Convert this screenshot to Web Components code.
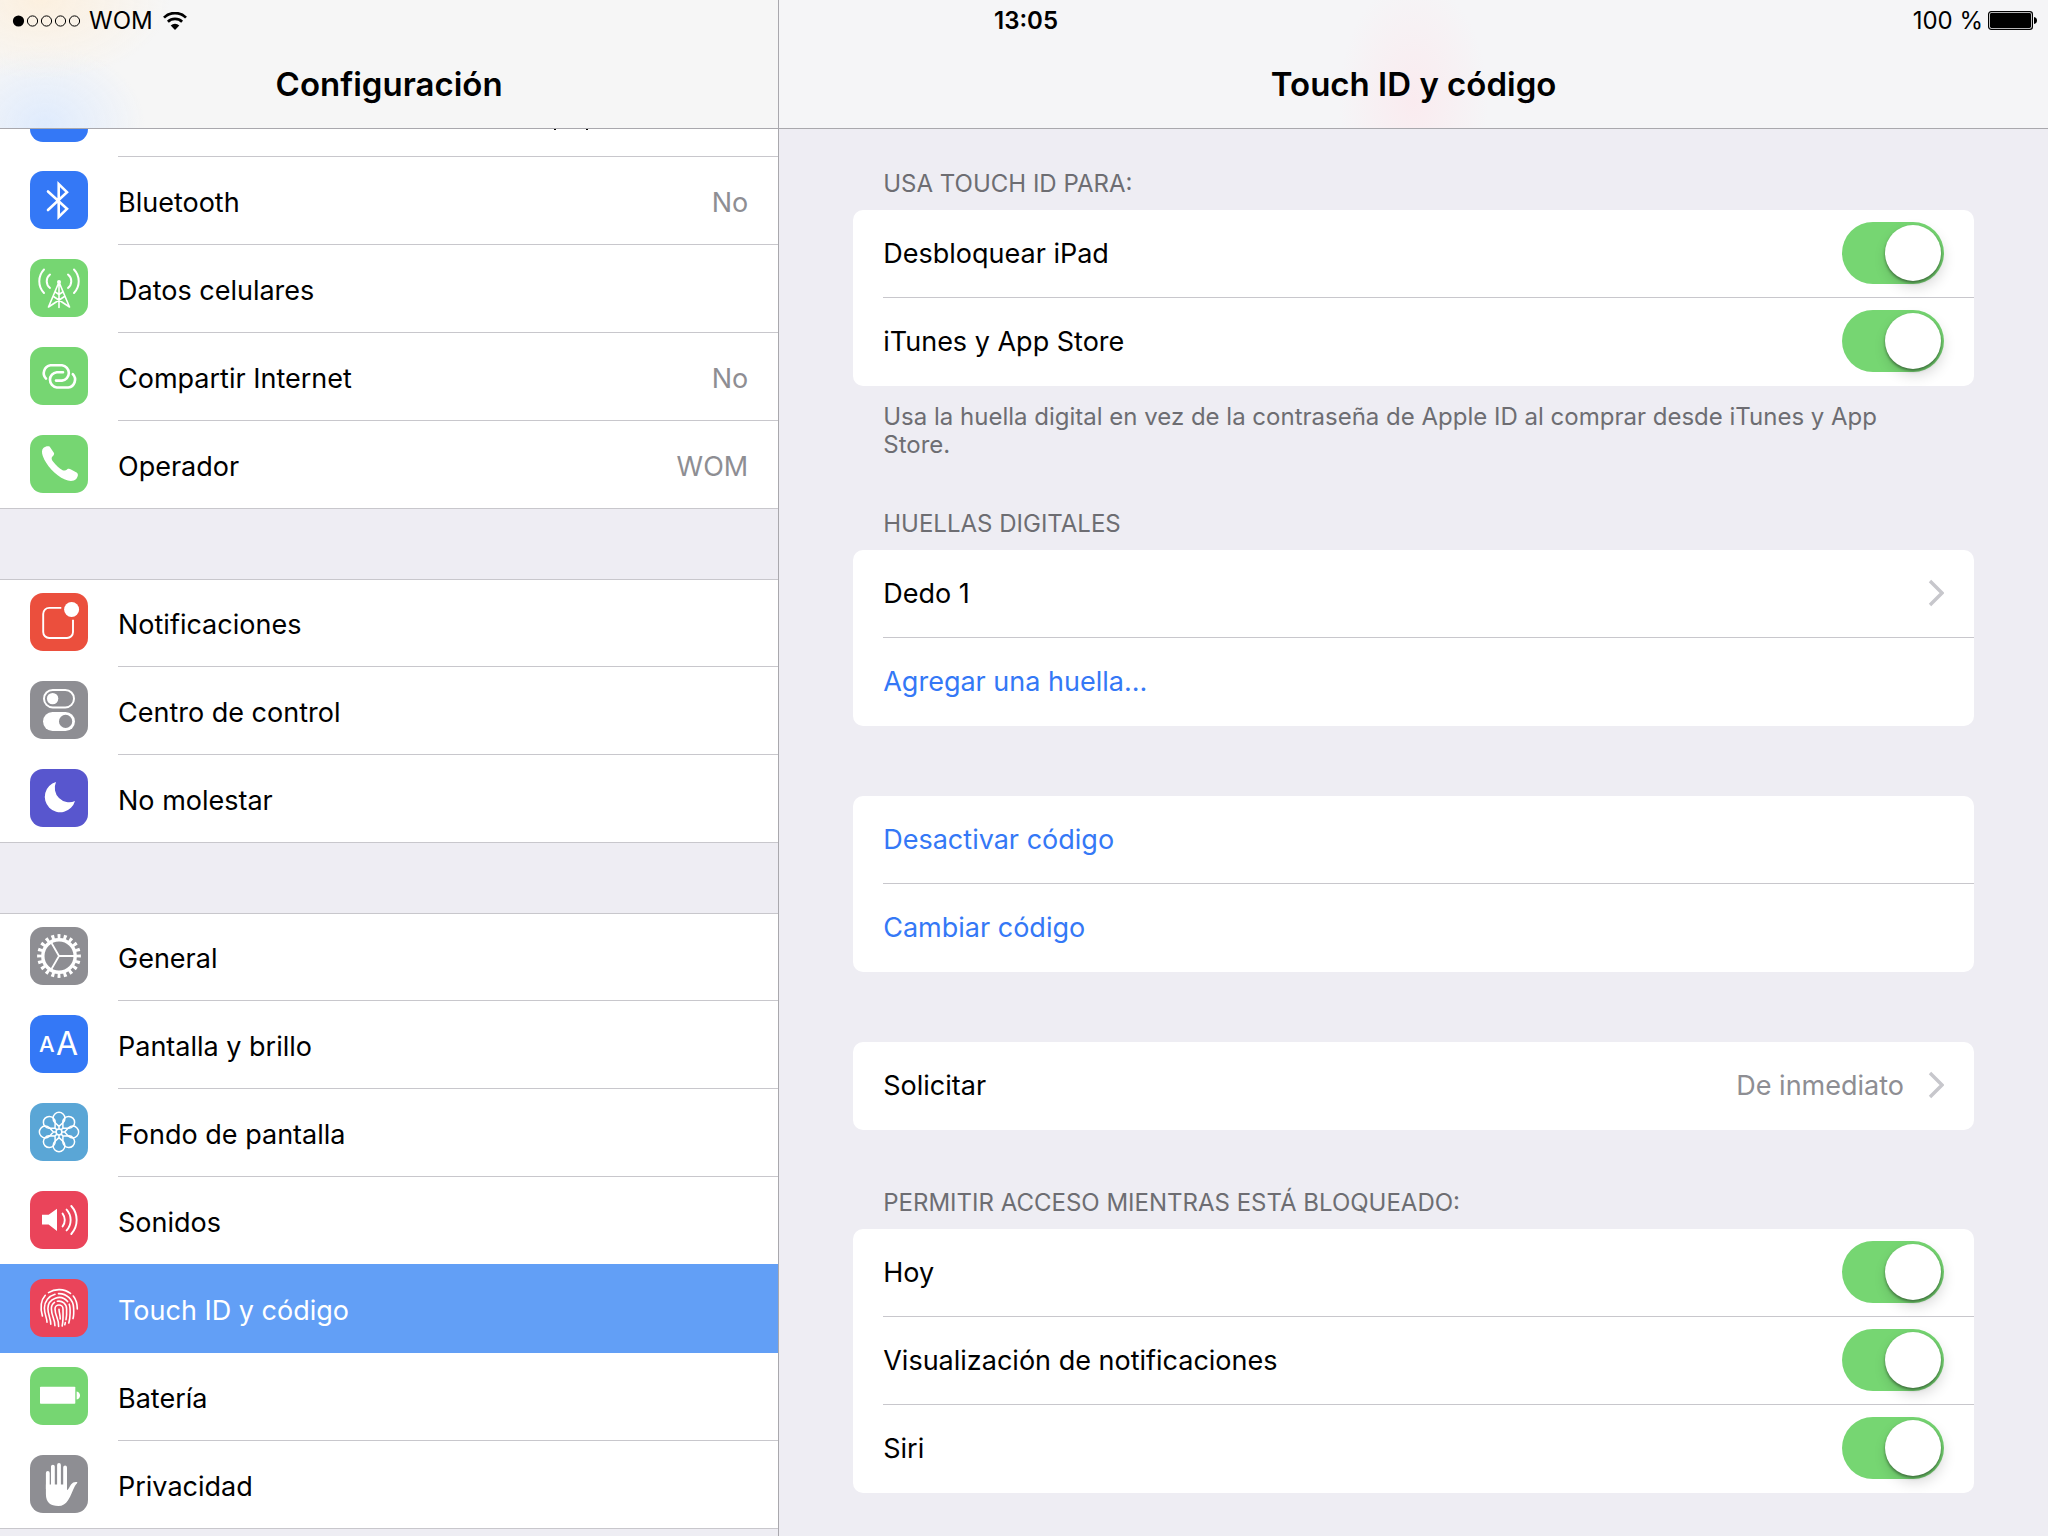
<!DOCTYPE html>
<html lang="es">
<head>
<meta charset="utf-8">
<meta name="viewport" content="width=device-width, initial-scale=1">
<title>Configuración</title>
<style>
  html, body { margin: 0; }
  body {
    font-family: Inter, "Liberation Sans", sans-serif;
    font-size: 27px;
    line-height: 34px;
    color: #000;
    background: #eeedf3;
    --line: #c8c7cc;
    --bar-line: #a9a8ad;
    --link: #3478f6;
    --value: #8e8e93;
    --note: #6d6d72;
  }
</style>
</head>
<body>
<settings-app></settings-app>

<script>
const ICONS = {
  wifi: ['#3478f6', ''],
  bluetooth: ['#3478f6', '<path d="M18 20.5L37 37.8 28.7 46V13L37 21.2 18 39" fill="none" stroke="#fff" stroke-width="2.6" stroke-linecap="round"/>'],
  cellular: ['#76d672', `<g fill="none" stroke="#fff" stroke-width="2" stroke-linecap="round">
      <path d="M14 10.5A17 17 0 0 0 14 34M44 10.5A17 17 0 0 1 44 34M20 15.5A8.6 8.6 0 0 0 20 29M38 15.5A8.6 8.6 0 0 1 38 29"/>
      <path d="M29 23V48.5M28.6 24L18.5 48M29.4 24L39.5 48M18.5 48L34.5 37.5M39.5 48L23.5 37.5M25.3 33L29 35.5 32.7 33" stroke-width="1.6"/></g>
      <circle cx="29" cy="23" r="2" fill="#fff"/>`],
  hotspot: ['#76d672', `<path d="M16 31.6A7.9 7.9 0 0 1 20.5 18.3H32A7.7 7.7 0 0 1 32 33.6H26M42.8 27.2A7.9 7.9 0 0 1 38.3 40.5H26.8A7.7 7.7 0 0 1 26.8 25.2H33" fill="none" stroke="#fff" stroke-width="2.6" stroke-linecap="round"/>`],
  phone: ['#76d672', `<path fill="#fff" d="M13.6 12.8C15.2 11.3 18 10.6 19.6 11.6L24 18C24.5 19.4 23.4 20.6 22.2 21.8C21.2 23.2 21.6 24.6 23 26.6C26 30.6 29.6 33.8 32.6 35.2C34.6 35.9 35.8 35.3 37 34.4C38.2 33.6 39.8 33.8 41 34.4L47 37.8C48.6 39 48 41.6 46.4 43.8C43.6 46.8 39 46.4 35 44.6C25 40 16 30 12.8 21C11.6 17.4 11.6 14.8 13.6 12.8Z"/>`],
  notifications: ['#eb4f3d', `<path d="M31.3 14.9H19.2a6 6 0 0 0-6 6V39a6 6 0 0 0 6 6H37a6 6 0 0 0 6-6V26.8" fill="none" stroke="#fff" stroke-width="1.9"/><circle cx="41.6" cy="16.5" r="7.5" fill="#fff"/>`],
  control: ['#8e8e93', `<rect x="14" y="9" width="30" height="17.4" rx="8.7" fill="none" stroke="#fff" stroke-width="2"/><circle cx="22.6" cy="17.6" r="5.7" fill="#fff"/><rect x="13" y="31" width="32" height="19" rx="9.5" fill="#fff"/><circle cx="35.6" cy="40.4" r="6.6" fill="#8e8e93"/>`],
  moon: ['#5856ce', `<path d="M26 13A15.4 15.4 0 1 0 45 32A14.4 14.4 0 0 1 26 13Z" fill="#fff"/>`],
  general: ['#8e8e93', `<g fill="none" stroke="#fff"><circle cx="29" cy="29" r="16.2" stroke-width="3.4"/><circle cx="29" cy="29" r="19.4" stroke-width="5" pathLength="200" stroke-dasharray="4.8 5.2" stroke-dashoffset="2.4"/><path d="M29 29H44M29 29L21.5 16M29 29L21.5 42" stroke-width="1.8"/></g>`],
  display: ['#3478f6', `<g fill="#fff"><text x="9" y="37" font-size="22" font-weight="500">A</text><text x="26" y="40" font-size="32">A</text></g>`],
  wallpaper: ['#5aa6d6', `<g fill="none" stroke="#fff" stroke-width="1.5">${[0,45,90,135,180,225,270,315].map(a => `<path transform="rotate(${a} 29 29)" d="M29 23.4L24.6 19.2A5.9 5.9 0 1 1 33.4 19.2ZM29 23.4V26"/>`).join('')}<circle cx="29" cy="29" r="2.9"/></g>`],
  sounds: ['#ea445a', `<path d="M12 23.8H18.6L27 17.8V40L18.6 33.4H12Z" fill="#fff"/><path d="M32.6 22.6A10.5 10.5 0 0 1 32.6 35.4M36.6 18.6A15.4 15.4 0 0 1 36.6 39.4M41.3 15A21 21 0 0 1 41.3 43" fill="none" stroke="#fff" stroke-width="1.9" stroke-linecap="round"/>`],
  touchid: ['#ea445a', `<g fill="none" stroke="#fff" stroke-width="1.6" stroke-linecap="round">
      <path d="M18.5 13.6A19.5 19.5 0 0 1 40.5 14.4M15.3 16.3C10.6 21.5 10.2 29 12.4 37M43.3 17C46 20.4 47.3 25 47.3 30"/>
      <path d="M17 43.2C17 38.6 14.4 35.5 14.4 29A14.5 14.5 0 0 1 25 15.2M28.5 14.6A14.6 14.6 0 0 1 43.6 29C43.9 33.5 43.8 37 43 39.6"/>
      <path d="M20.8 45.2C21 40 17.9 36 17.9 29.5A11.1 11.1 0 0 1 37.6 22.6M39.2 25.2C40.5 28.5 40.5 38.5 38.8 44"/>
      <path d="M24.9 46.6C25.2 40.5 21.4 37 21.4 30A7.6 7.6 0 0 1 24.5 23.4M27.4 22.3A7.7 7.7 0 0 1 36.6 30C36.8 35 36.6 38 36 40.6M35.3 43.6L34.8 45.8"/>
      <path d="M28.6 47.4C29.4 40.5 25 37 25 30A4 4 0 0 1 33 30C33 37 33.4 41 32.2 47"/>
      <path d="M29 30.2C29 34 30.4 36 30.2 40"/></g>`],
  battery: ['#76d672', `<rect x="10" y="19.8" width="35.3" height="17" rx=".8" fill="#fff"/><path d="M46.6 24.4C49 24.8 50 26.5 50 28.4S49 32 46.6 32.4Z" fill="#fff"/>`],
  privacy: ['#8e8e93', `<path d="M17.8 18V34M22.9 11.6V32M29 10V32M35.1 12.4V34" stroke="#fff" stroke-width="3.8" stroke-linecap="round"/><path fill="#fff" d="M15.9 29.5H37V35.2C38.6 34.4 39.4 32 41 29.6C42.8 27.2 45 26.6 47.4 27.2C47.2 28.6 45.8 29.4 44.8 31.2C42.4 35.6 41 40.6 38.2 45C35.6 49.2 32.4 51 28.4 51C20.6 51 15.9 47.4 15.9 39Z"/>`]
};

const define = (name, html, setup) => {
  const template = document.createElement('template');
  template.innerHTML = html;
  customElements.define(name, class extends HTMLElement {
    connectedCallback() {
      if (this.shadowRoot) return;
      const root = this.attachShadow({ mode: 'open' });
      root.append(template.content.cloneNode(true));
      if (setup) setup(this, root);
    }
  });
};

/* Rounded square holding one of the glyphs above */
define('app-icon', `
  <style>
    :host { display: block; flex: none; width: 58px; height: 58px; border-radius: 13px; overflow: hidden; }
    svg { display: block; width: 100%; height: 100%; }
  </style>
  <svg viewBox="0 0 58 58" aria-hidden="true"></svg>`,
  (host, root) => {
    const [color, art] = ICONS[host.getAttribute('name')];
    host.style.background = color;
    root.querySelector('svg').innerHTML = art;
  });

define('status-bar', `
  <style>
    :host { display: grid; grid-template-columns: 1fr auto 1fr; align-items: center; height: 41px; padding: 0 11px 0 12px; font-size: 24px; line-height: 28px; }
    div { display: flex; align-items: center; }
    .end { justify-content: flex-end; gap: 5px; }
    .dots { margin-right: 8px; }
    .wifi { margin-left: 10px; }
    time { padding-left: 3px; font-weight: 600; }
    svg { display: block; }
  </style>
  <div>
    <svg class="dots" width="69" height="12" viewBox="0 0 69 12" aria-hidden="true">
      <circle cx="6.5" cy="6" r="5.6"/>
      <g fill="none" stroke="#000"><circle cx="20.5" cy="6" r="5.1"/><circle cx="34.5" cy="6" r="5.1"/><circle cx="48.5" cy="6" r="5.1"/><circle cx="62.5" cy="6" r="5.1"/></g>
    </svg>
    <span>WOM</span>
    <svg class="wifi" width="24" height="18" viewBox="0 0 24 18" aria-hidden="true">
      <path d="M1 5.6A15.6 15.6 0 0 1 23 5.6M4.9 9.7A10.2 10.2 0 0 1 19.1 9.7" fill="none" stroke="#000" stroke-width="2.7"/>
      <path d="M12 18L7.7 13.5A6.2 6.2 0 0 1 16.3 13.5Z"/>
    </svg>
  </div>
  <time>13:05</time>
  <div class="end">
    <span>100 %</span>
    <svg width="49" height="19" viewBox="0 0 49 19" aria-hidden="true">
      <rect x=".6" y=".6" width="43.8" height="17.8" rx="2.6" fill="none" stroke="#000" stroke-width="1.2"/>
      <rect x="2" y="2" width="41" height="15" rx="1.4"/>
      <path d="M46 6C48.2 6.4 49 7.8 49 9.5S48.2 12.6 46 13Z"/>
    </svg>
  </div>`);

define('pane-title', `
  <style>
    :host { display: block; box-sizing: border-box; height: 129px; padding-top: 64px; border-bottom: 1px solid var(--bar-line); background: var(--bar, #f5f5f6); text-align: center; }
    h1 { margin: 0; font-size: 33px; line-height: 40px; font-weight: 600; }
  </style>
  <h1><slot></slot></h1>`);

define('nav-group', `
  <style>
    :host { display: block; background: #fff; box-shadow: inset 0 1px var(--line), inset 0 -1px var(--line); }
    :host([continued]) { box-shadow: inset 0 -1px var(--line); }
  </style>
  <slot></slot>`);

define('nav-row', `
  <style>
    :host { display: block; }
    a { display: flex; gap: 30px; box-sizing: border-box; height: 88px; padding-left: 30px; color: inherit; text-decoration: none; }
    app-icon { margin-top: 14px; }
    .body { flex: 1; display: flex; align-items: center; justify-content: space-between; padding: 5px 30px 0 0; border-bottom: 1px solid var(--line); }
    .value { color: var(--value); }
    :host(:last-child) .body { border-color: transparent; }
    :host([selected]) { position: relative; background: #629ff6; box-shadow: 0 -1px #629ff6; color: #fff; }
    :host([selected]) .body { border-color: transparent; }
    /* row scrolled up under the title bar */
    :host([partial]) a { height: 28px; align-items: flex-end; overflow: hidden; }
    :host([partial]) app-icon { margin: 0 0 15px; }
    :host([partial]) .body { align-self: stretch; padding-top: 0; }
    .ticks { display: none; }
    :host([partial]) .ticks { display: block; align-self: flex-start; margin: 0 160px 0 auto; }
  </style>
  <a href="#"><span class="body"><slot></slot><span class="value"></span>
    <svg class="ticks" width="34" height="1" aria-hidden="true"><path d="M0 0H2V1H0ZM32 0H34V1H32Z"/></svg></span></a>`,
  (host, root) => {
    const link = root.querySelector('a');
    const icon = document.createElement('app-icon');
    icon.setAttribute('name', host.getAttribute('icon'));
    link.prepend(icon);
    root.querySelector('.value').textContent = host.getAttribute('value') || '';
    if (host.hasAttribute('selected')) link.setAttribute('aria-current', 'page');
    if (host.hasAttribute('partial')) {
      root.querySelector('.value').remove();
      link.setAttribute('aria-label', 'Wi-Fi');
    }
  });

define('settings-card', `
  <style>
    :host { display: block; }
    h2, p { margin: 0; padding: 0 30px; font-size: 24px; line-height: 28px; font-weight: 400; color: var(--note); }
    h2 { padding-bottom: 12px; text-transform: uppercase; }
    p { padding-top: 17px; }
    .card { background: #fff; border-radius: 10px; }
  </style>
  <h2></h2><div class="card"><slot></slot></div><p></p>`,
  (host, root) => {
    for (const [tag, attr] of [['h2', 'heading'], ['p', 'note']]) {
      const el = root.querySelector(tag);
      if (host.hasAttribute(attr)) el.textContent = host.getAttribute(attr); else el.remove();
    }
  });

const rowStyle = `
    :host { display: block; padding-left: 30px; }
    .row { all: unset; display: flex; align-items: center; box-sizing: border-box; width: 100%; height: 88px; padding: 0 30px 1px 0; border-bottom: 1px solid var(--line); cursor: pointer; }
    :host(:last-child) .row { border-color: transparent; }
    .name { flex: 1; }
    .name, .value { padding-top: 2px; }`;

define('switch-row', `
  <style>${rowStyle}
    input { appearance: none; position: relative; flex: none; width: 102px; height: 62px; margin: 0; border-radius: 31px; background: #e5e5ea; }
    input::before { content: ""; position: absolute; top: 3px; left: 3px; width: 56px; height: 56px; border-radius: 50%; background: #fff; box-shadow: 0 2px 3px rgba(0,0,0,.4), 2px 6px 14px rgba(0,0,0,.16); }
    input:checked { background: #76d672; }
    input:checked::before { left: 43px; }
  </style>
  <label class="row"><span class="name"><slot></slot></span><input type="checkbox" role="switch" checked></label>`);

define('action-row', `
  <style>${rowStyle} .row { color: var(--link); }</style>
  <button class="row" type="button"><span class="name"><slot></slot></span></button>`);

define('link-row', `
  <style>${rowStyle}
    .value { color: var(--value); }
    svg { flex: none; margin-left: 24px; }
  </style>
  <a class="row" href="#"><span class="name"><slot></slot></span><span class="value"><slot name="value"></slot></span>
    <svg width="16" height="28" viewBox="0 0 16 28" aria-hidden="true"><path d="M2 2L14 14 2 26" fill="none" stroke="#c7c7cc" stroke-width="3.4"/></svg></a>`);

define('settings-app', `
  <style>
    :host { display: flex; position: relative; min-height: 100vh; overflow: hidden; }
    status-bar { position: absolute; top: 0; left: 0; right: 0; }
    nav { flex: none; width: 38%; border-right: 1px solid var(--bar-line);
      --bar: radial-gradient(ellipse 130px 80px at 40px 0, #fcf0df, transparent), radial-gradient(ellipse 100px 80px at 45px 125px, #dfebfd, transparent), #f6f6f6; }
    .list { display: flex; flex-direction: column; gap: 70px; }
    main { flex: 1; --bar: radial-gradient(ellipse 75px 120px at 50% 100px, #faebef, transparent), #f5f5f7; }
    .cards { display: flex; flex-direction: column; padding: 41px 74px 43px; }
    .after-note { margin-top: 51px; }
    .plain { margin-top: 70px; }
    .titled { margin-top: 59px; }
  </style>
  <nav>
    <pane-title>Configuración</pane-title>
    <div class="list">
      <nav-group continued>
        <nav-row icon="wifi" partial></nav-row>
        <nav-row icon="bluetooth" value="No">Bluetooth</nav-row>
        <nav-row icon="cellular">Datos celulares</nav-row>
        <nav-row icon="hotspot" value="No">Compartir Internet</nav-row>
        <nav-row icon="phone" value="WOM">Operador</nav-row>
      </nav-group>
      <nav-group>
        <nav-row icon="notifications">Notificaciones</nav-row>
        <nav-row icon="control">Centro de control</nav-row>
        <nav-row icon="moon">No molestar</nav-row>
      </nav-group>
      <nav-group>
        <nav-row icon="general">General</nav-row>
        <nav-row icon="display">Pantalla y brillo</nav-row>
        <nav-row icon="wallpaper">Fondo de pantalla</nav-row>
        <nav-row icon="sounds">Sonidos</nav-row>
        <nav-row icon="touchid" selected>Touch ID y código</nav-row>
        <nav-row icon="battery">Batería</nav-row>
        <nav-row icon="privacy">Privacidad</nav-row>
      </nav-group>
    </div>
  </nav>
  <main>
    <pane-title>Touch ID y código</pane-title>
    <div class="cards">
      <settings-card heading="Usa Touch ID para:" note="Usa la huella digital en vez de la contraseña de Apple ID al comprar desde iTunes y App Store.">
        <switch-row>Desbloquear iPad</switch-row>
        <switch-row>iTunes y App Store</switch-row>
      </settings-card>
      <settings-card class="after-note" heading="Huellas digitales">
        <link-row>Dedo 1</link-row>
        <action-row>Agregar una huella...</action-row>
      </settings-card>
      <settings-card class="plain">
        <action-row>Desactivar código</action-row>
        <action-row>Cambiar código</action-row>
      </settings-card>
      <settings-card class="plain">
        <link-row>Solicitar<span slot="value">De inmediato</span></link-row>
      </settings-card>
      <settings-card class="titled" heading="Permitir acceso mientras está bloqueado:">
        <switch-row>Hoy</switch-row>
        <switch-row>Visualización de notificaciones</switch-row>
        <switch-row>Siri</switch-row>
      </settings-card>
    </div>
  </main>
  <status-bar></status-bar>`);
</script>
</body>
</html>
